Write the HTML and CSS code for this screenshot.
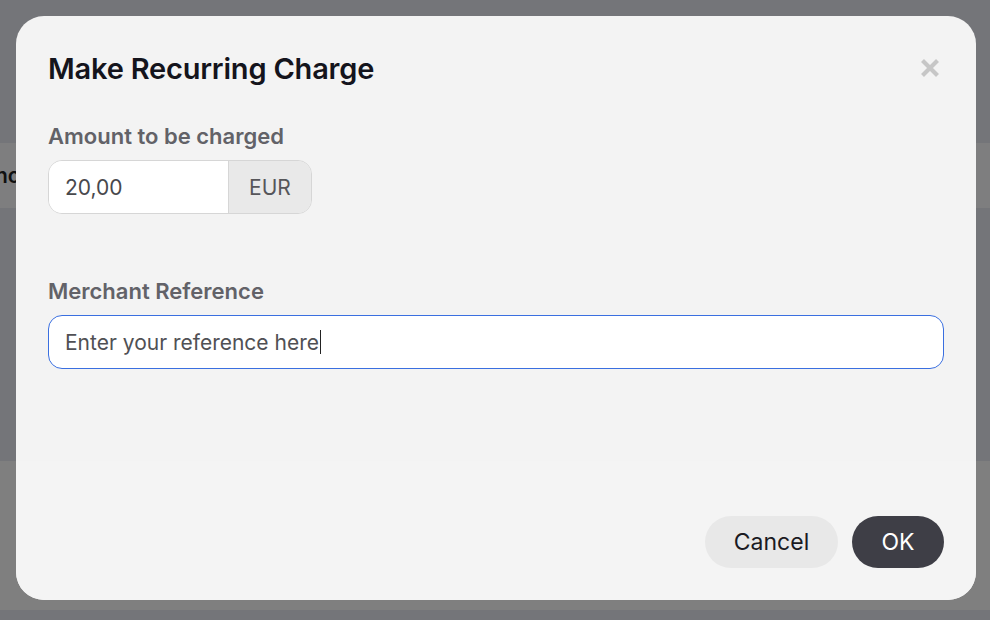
FILE: index.html
```html
<!DOCTYPE html>
<html lang="en">
<head>
<meta charset="utf-8">
<title>Make Recurring Charge</title>
<link rel="stylesheet" href="styles.css">
</head>
<body>
<div class="backdrop">
  <div class="bg-band bg-band-top"><span class="bg-text">no</span></div>
  <div class="bg-band bg-band-bottom"></div>
</div>
<div class="overlay">
  <div class="modal">
    <div class="modal-body">
      <div class="modal-header">
        <h1 class="modal-title">Make Recurring Charge</h1>
        <button class="close-btn" aria-label="Close">
          <svg width="20" height="20" viewBox="0 0 20 20"><path d="M2.5 2.5 L17.5 17.5 M17.5 2.5 L2.5 17.5" stroke="#c6c6c6" stroke-width="4.2" stroke-linecap="butt"/></svg>
        </button>
      </div>
      <div class="field">
        <label class="field-label">Amount to be charged</label>
        <div class="input-group">
          <div class="input-main">20,00</div>
          <div class="input-addon">EUR</div>
        </div>
      </div>
      <div class="field field-ref">
        <label class="field-label">Merchant Reference</label>
        <div class="input-text focused">Enter your reference here<span class="caret"></span></div>
      </div>
    </div>
    <div class="modal-footer">
      <button class="btn btn-secondary">Cancel</button>
      <button class="btn btn-primary">OK</button>
    </div>
  </div>
</div>
</body>
</html>
```
FILE: styles.css
```css
* { box-sizing: border-box; }
html, body { margin: 0; padding: 0; }
body {
  width: 990px;
  height: 620px;
  overflow: hidden;
  background: #747579;
  font-family: Inter, "Noto Sans", sans-serif;
  position: relative;
}
.backdrop {
  position: absolute;
  inset: 0;
}
.bg-band {
  position: absolute;
  left: 0;
  right: 0;
  background: #7e7e7f;
}
.bg-band-top {
  top: 143px;
  height: 65px;
  display: flex;
  align-items: center;
}
.bg-text {
  margin-left: -5px;
  font-size: 21px;
  font-weight: 600;
  color: #111;
}
.bg-band-bottom {
  top: 461px;
  height: 149px;
  background: #7f7f7f;
}
.overlay {
  position: absolute;
  inset: 0;
  padding: 16px 14px 20px 16px;
}
.modal {
  width: 960px;
  height: 584px;
  background: #f3f3f3;
  border-radius: 28px;
  display: flex;
  flex-direction: column;
  overflow: hidden;
}
.modal-body {
  padding: 32px 32px 0 32px;
  height: 445px;
}
.modal-header {
  display: flex;
  justify-content: space-between;
  align-items: center;
  height: 40px;
}
.modal-title {
  margin: 0;
  font-size: 29px;
  font-weight: 600;
  color: #14141c;
  letter-spacing: -0.2px;
}
.close-btn {
  border: 0;
  background: none;
  padding: 0;
  margin-right: 4px;
  width: 20px;
  height: 20px;
  display: flex;
}
.field { margin-top: 35px; }
.field-label {
  display: block;
  font-size: 22px;
  font-weight: 600;
  color: #626268;
  line-height: 26px;
  margin-bottom: 11px;
}
.input-group {
  display: flex;
  width: 264px;
  height: 54px;
  border: 1px solid #d6d6d6;
  border-radius: 14px;
  overflow: hidden;
}
.input-main {
  width: 179px;
  background: #fff;
  display: flex;
  align-items: center;
  padding-left: 16px;
  font-size: 21px;
  color: #48484c;
}
.input-addon {
  flex: 1;
  background: #e9e9e9;
  border-left: 1px solid #d6d6d6;
  display: flex;
  align-items: center;
  justify-content: center;
  font-size: 21px;
  color: #56565a;
}
.field-ref { margin-top: 64px; }
.input-text {
  height: 54px;
  background: #fff;
  border: 1px solid #3a6fe0;
  border-radius: 14px;
  display: flex;
  align-items: center;
  padding-left: 16px;
  font-size: 21px;
  color: #505054;
}
.caret {
  display: inline-block;
  width: 1.5px;
  height: 24px;
  background: #222;
  margin-left: 1px;
}
.modal-footer {
  flex: 1;
  background: #f4f4f4;
  display: flex;
  justify-content: flex-end;
  align-items: flex-end;
  gap: 14px;
  padding: 0 32px 32px 0;
}
.btn {
  height: 52px;
  border: 0;
  border-radius: 26px;
  font-family: Inter, "Noto Sans", sans-serif;
  font-size: 23px;
  padding: 0;
}
.btn-secondary {
  background: #e8e8e8;
  color: #1a1a22;
  width: 133px;
}
.btn-primary {
  background: #3e3e46;
  color: #fff;
  width: 92px;
}
```
